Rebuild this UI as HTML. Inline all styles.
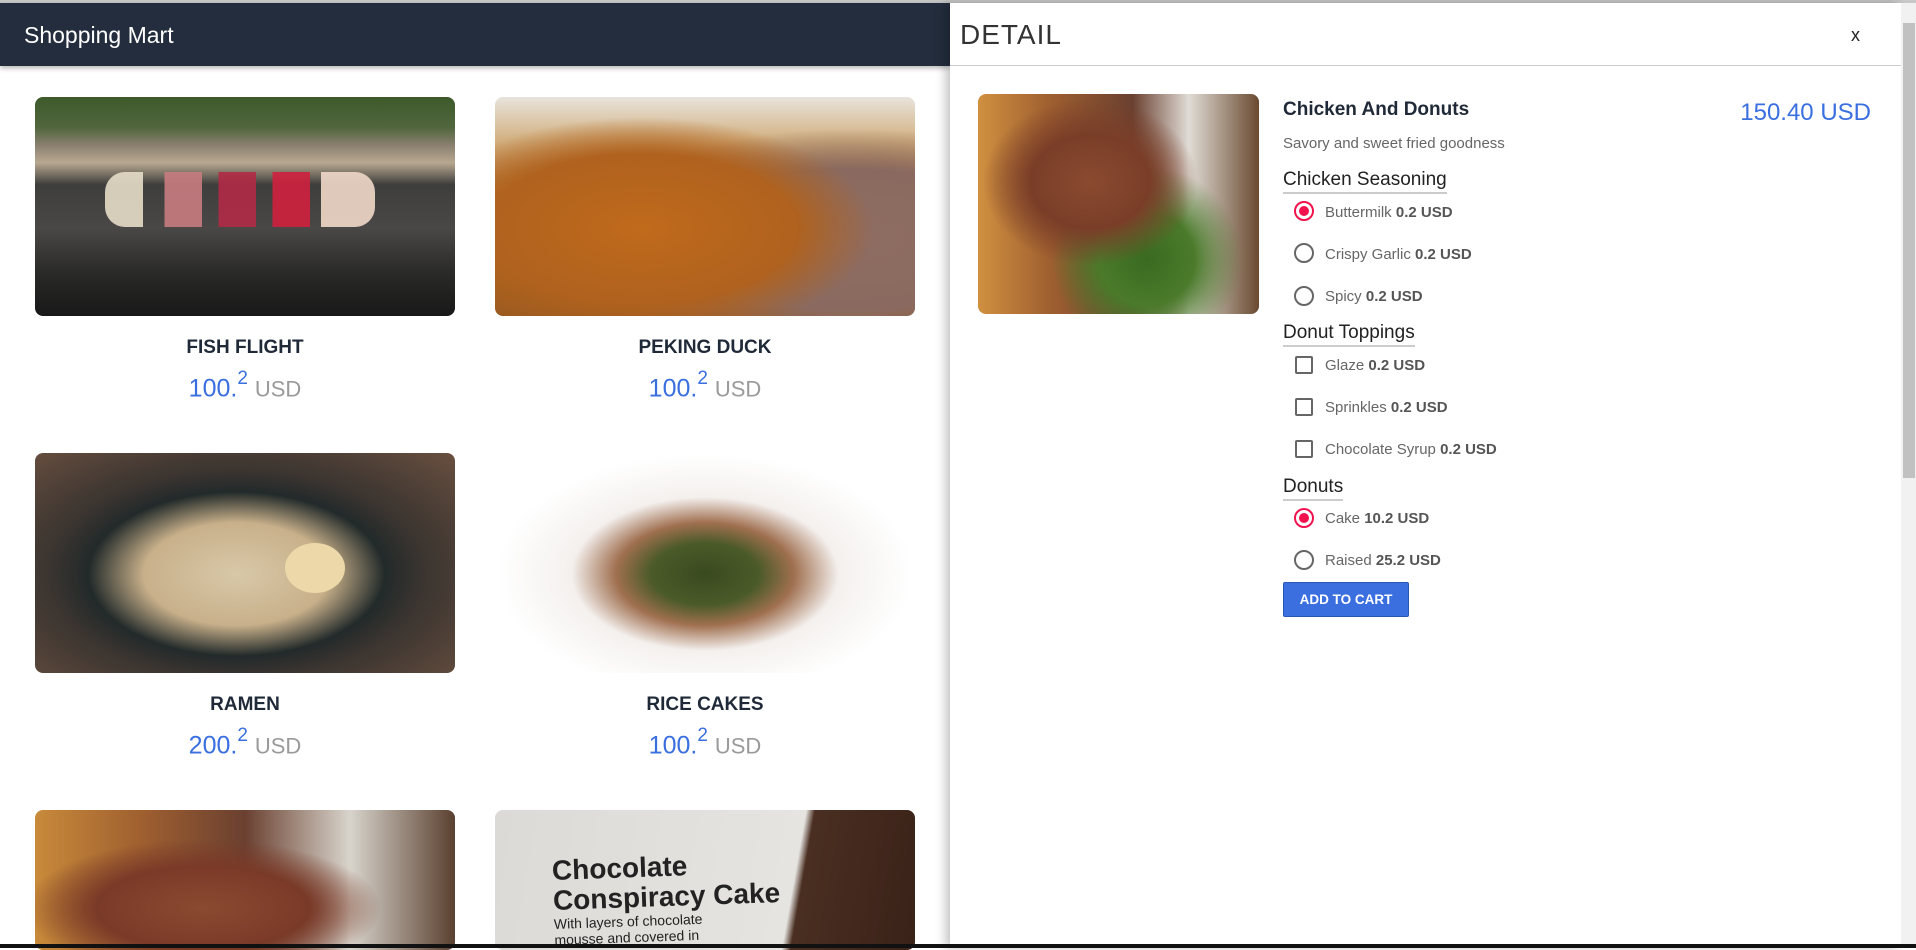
<!DOCTYPE html>
<html><head><meta charset="utf-8"><style>
*{margin:0;padding:0;box-sizing:border-box}
body{width:1916px;height:948px;overflow:hidden;background:#fff;font-family:"Liberation Sans",sans-serif;position:relative}
.top{position:absolute;left:0;top:0;width:1916px;height:3px;background:#c8c8c8}
.hdr{position:absolute;left:0;top:3px;width:950px;height:63px;background:#232d3d;box-shadow:0 2px 5px rgba(0,0,0,.3)}
.hdr span{position:absolute;left:24px;top:19px;color:#fff;font-size:23px}
.img{position:absolute;border-radius:8px;overflow:hidden}
.t{position:absolute;width:420px;text-align:center;font-weight:bold;font-size:19px;color:#1f2937}
.p{position:absolute;width:420px;text-align:center;font-size:25px;color:#3a6fe0}
.p sup{font-size:19px;position:relative;top:-3px}
.p small{font-size:22px;color:#9a9a9a}
.panel{position:absolute;left:950px;top:3px;width:951px;height:945px;background:#fff;box-shadow:-4px 0 10px rgba(0,0,0,.25)}
.sb{position:absolute;left:1901px;top:3px;width:15px;height:945px;background:#f1f1f1}
.sb div{position:absolute;left:2px;top:20px;width:12px;height:455px;background:#c1c1c1}
.abs{position:absolute}
.sec{position:absolute;left:1283px;font-size:19px;color:#222;border-bottom:2px solid #ccc;line-height:22px;padding-bottom:1px}
.opt{position:absolute;left:1325px;font-size:15px;color:#666}
.opt b{color:#555}
.rad{position:absolute;left:1294px;width:20px;height:20px;border:2px solid #666;border-radius:50%}
.rad.on{border-color:#f0134d}
.rad.on::after{content:"";position:absolute;left:3px;top:3px;width:10px;height:10px;border-radius:50%;background:#f0134d}
.chk{position:absolute;left:1295px;width:18px;height:18px;border:2px solid #666;border-radius:2px}
.bot{position:absolute;left:0;top:944px;width:1916px;height:4px;background:#111}
</style></head><body>
<div class="top"></div>
<div class="hdr"><span>Shopping Mart</span></div>

<div class="img" style="left:35px;top:97px;width:420px;height:219px;background:linear-gradient(180deg,#3d5a2a 0%,#51663d 14%,#8a8070 22%,#b8a890 30%,#3e3e3c 40%,#4a4846 60%,#2a2a29 80%,#181818 100%)">
<div class="abs" style="left:70px;top:75px;width:270px;height:55px;background:linear-gradient(90deg,#e6dcc8 0 14%,transparent 14% 22%,#c87c80 22% 36%,transparent 36% 42%,#b02a45 42% 56%,transparent 56% 62%,#d0203e 62% 76%,transparent 76% 80%,#f0d8c8 80%);border-radius:20px;opacity:.9"></div></div>
<div class="img" style="left:495px;top:97px;width:420px;height:219px;background:radial-gradient(ellipse at 35% 60%,#c06a1c 0,#b0621e 40%,transparent 60%),radial-gradient(ellipse at 85% 65%,#8e6c62 0,#8a6a60 35%,transparent 55%),linear-gradient(180deg,#e8e4dc 0,#d2b080 20%,#b0681e 50%,#9a5a20 100%)"></div>
<div class="t" style="left:35px;top:337px">FISH FLIGHT</div>
<div class="p" style="left:35px;top:371px">100.<sup>2</sup> <small>USD</small></div>
<div class="t" style="left:495px;top:337px">PEKING DUCK</div>
<div class="p" style="left:495px;top:371px">100.<sup>2</sup> <small>USD</small></div>

<div class="img" style="left:35px;top:453px;width:420px;height:220px;background:radial-gradient(ellipse at 48% 55%,#d8c8a8 0,#c8b08a 30%,#222a2a 48%,#3a3430 60%,#6a5040 100%)">
<div class="abs" style="left:250px;top:90px;width:60px;height:50px;border-radius:50%;background:#ecd8a8"></div></div>
<div class="img" style="left:495px;top:453px;width:420px;height:220px;background:radial-gradient(ellipse at 50% 55%,#3a4a20 0,#4a5a28 18%,#a07050 30%,#f4f0ee 45%,#ffffff 70%),linear-gradient(#ccc,#fff)"></div>
<div class="t" style="left:35px;top:694px">RAMEN</div>
<div class="p" style="left:35px;top:728px">200.<sup>2</sup> <small>USD</small></div>
<div class="t" style="left:495px;top:694px">RICE CAKES</div>
<div class="p" style="left:495px;top:728px">100.<sup>2</sup> <small>USD</small></div>

<div class="img" style="left:35px;top:810px;width:420px;height:140px;background:radial-gradient(ellipse at 40% 70%,#8a4a30 0,#7a3a28 30%,transparent 50%),linear-gradient(90deg,#c88a3a 0,#a06030 25%,#6a4030 50%,#d8d4cc 75%,#5a4030 100%)"></div>
<div class="img" style="left:495px;top:810px;width:420px;height:140px;background:linear-gradient(100deg,#dcdad6 0,#e6e4e0 70%,#4a2e22 72%,#3a2218 100%)">
<div class="abs" style="left:58px;top:42px;font-weight:bold;font-size:28px;color:#222;line-height:30px;transform:rotate(-2deg)">Chocolate<br>Conspiracy Cake<div style="font-size:14px;font-weight:normal;line-height:16px">With layers of chocolate<br>mousse and covered in</div></div></div>

<div class="panel"></div>
<div class="abs" style="left:960px;top:19px;font-size:28px;color:#333;letter-spacing:1px">DETAIL</div>
<div class="abs" style="left:1851px;top:25px;font-size:18px;color:#222">x</div>
<div class="abs" style="left:950px;top:65px;width:951px;height:1px;background:#ccc"></div>

<div class="img" style="left:978px;top:94px;width:281px;height:220px;background:radial-gradient(ellipse at 40% 40%,#8a4a30 0,#7a3e28 25%,transparent 45%),radial-gradient(ellipse at 60% 75%,#3a6a20 0,#4a7a2a 20%,transparent 40%),linear-gradient(90deg,#d09040 0,#a06030 25%,#6a4030 55%,#e0dcd6 75%,#6a4a30 100%)"></div>

<div class="abs" style="left:1283px;top:99px;font-size:19px;font-weight:bold;color:#1f2937">Chicken And Donuts</div>
<div class="abs" style="left:1700px;top:99px;width:171px;text-align:right;font-size:24px;color:#3a6fe0">150.40 USD</div>
<div class="abs" style="left:1283px;top:135px;font-size:15px;color:#666">Savory and sweet fried goodness</div>

<div class="sec" style="top:169px">Chicken Seasoning</div>
<div class="rad on" style="top:201px"></div><div class="opt" style="top:204px">Buttermilk <b>0.2 USD</b></div>
<div class="rad" style="top:243px"></div><div class="opt" style="top:246px">Crispy Garlic <b>0.2 USD</b></div>
<div class="rad" style="top:286px"></div><div class="opt" style="top:288px">Spicy <b>0.2 USD</b></div>

<div class="sec" style="top:322px">Donut Toppings</div>
<div class="chk" style="top:356px"></div><div class="opt" style="top:357px">Glaze <b>0.2 USD</b></div>
<div class="chk" style="top:398px"></div><div class="opt" style="top:399px">Sprinkles <b>0.2 USD</b></div>
<div class="chk" style="top:440px"></div><div class="opt" style="top:441px">Chocolate Syrup <b>0.2 USD</b></div>

<div class="sec" style="top:476px">Donuts</div>
<div class="rad on" style="top:508px"></div><div class="opt" style="top:510px">Cake <b>10.2 USD</b></div>
<div class="rad" style="top:550px"></div><div class="opt" style="top:552px">Raised <b>25.2 USD</b></div>

<div class="abs" style="left:1283px;top:582px;width:126px;height:35px;background:#3b6fe0;border:1px solid #2a55b8;border-radius:2px;color:#fff;font-weight:bold;font-size:13.5px;text-align:center;line-height:33px">ADD TO CART</div>

<div class="sb"><div></div></div>
<div class="bot"></div>
</body></html>
